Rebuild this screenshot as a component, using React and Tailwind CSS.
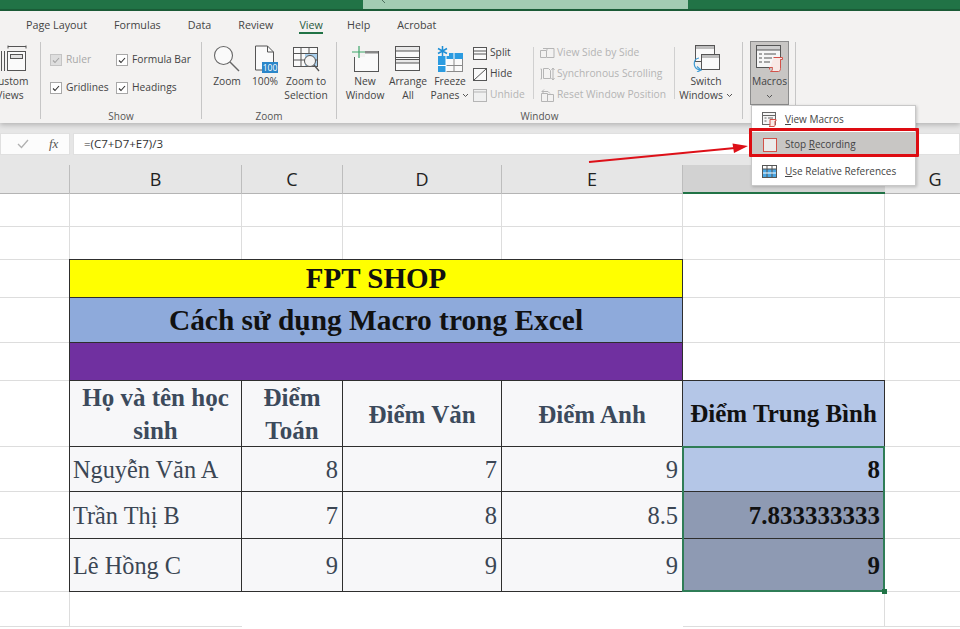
import React from "react";

const uiFont = "font-['Open_Sans',sans-serif]";
const serif = "font-['Liberation_Serif',serif]";

function Tab({ label, active, className = "" }) {
  return (
    <div className={"relative text-[10.75px] leading-[14px] " + className + " " + (active ? "text-[#2a5a40] font-medium" : "text-[#444]")}>
      {label}
      {active && <div className="absolute left-0 right-0 top-[14px] h-[2px] bg-[#217346]" />}
    </div>
  );
}

const Chevron = ({ className = "" }) => (
  <svg width="7" height="5" viewBox="0 0 7 5" className={className}>
    <path d="M1 1l2.5 2.5L6 1" fill="none" stroke="#555" strokeWidth="1" />
  </svg>
);

function LargeBtn({ w, icon, lines, chevron }) {
  return (
    <div className={"flex flex-col items-center shrink-0 " + w}>
      <div className="h-[31px] flex items-center justify-center">{icon}</div>
      {lines.map((l, i) => (
        <div key={i} className="h-[14px] leading-[14px] text-[10.25px] text-[#444] whitespace-nowrap flex items-center gap-[3px]">
          {l}
          {chevron && i === lines.length - 1 && <Chevron />}
        </div>
      ))}
    </div>
  );
}

function Check({ label, disabled }) {
  return (
    <div className="flex items-center gap-[4px] h-[12px] whitespace-nowrap">
      <div className={"w-[12px] h-[12px] border flex items-center justify-center " + (disabled ? "bg-[#dedede] border-[#c4c4c4]" : "bg-white border-[#a8a8a8]")}>
        <svg width="8" height="7" viewBox="0 0 8 7"><path d="M1 3.5l2 2L7 1" fill="none" stroke={disabled ? "#a5a5a5" : "#333"} strokeWidth="1.1" /></svg>
      </div>
      <span className={"text-[10.25px] " + (disabled ? "text-[#a8a8a8]" : "text-[#444]")}>{label}</span>
    </div>
  );
}

const Sep = () => <div className="w-px h-[77px] mt-[4px] bg-[#c6c6c6] shrink-0" />;

function Group({ w, label, children, className = "" }) {
  return (
    <div className={"relative flex flex-col h-[85px] shrink-0 " + w}>
      <div className={"flex flex-1 min-h-0 pt-[5px] " + className}>{children}</div>
      {label && <div className="text-center text-[10px] leading-[14px] h-[14px] text-[#555]">{label}</div>}
    </div>
  );
}

function SmallRow({ icon, label, disabled }) {
  return (
    <div className="flex items-center h-[14px] whitespace-nowrap gap-[2px]">
      {icon}
      <span className={"text-[10.25px] " + (disabled ? "text-[#b4b4b4]" : "text-[#444]")}>{label}</span>
    </div>
  );
}

const ink = "#555";
const IconCustom = () => (
  <svg width="26" height="27" viewBox="0 0 26 27">
    <path d="M7 1.5h18M7 .5v3M25 .5v3" stroke={ink} fill="none" />
    <rect x="6.5" y="6.5" width="18" height="19" fill="#fafafa" stroke={ink} />
    <rect x="9.5" y="9.5" width="12" height="4" fill="#e2e2e2" stroke={ink} />
    <path d="M.5 6v20M3.5 6v20" stroke={ink} fill="none" />
  </svg>
);
const IconZoom = () => (
  <svg width="28" height="28" viewBox="0 0 28 28">
    <circle cx="10.5" cy="10.5" r="9" fill="#fafafa" stroke="#666" strokeWidth="1.1" />
    <path d="M17 17l9 9" stroke="#666" strokeWidth="1.4" />
  </svg>
);
const Icon100 = () => (
  <svg width="26" height="28" viewBox="0 0 26 28">
    <path d="M3.5 1h12l6 6v18h-18z" fill="#fafafa" stroke="#555" />
    <path d="M15.5 1v6h6" fill="none" stroke="#555" />
    <rect x="10" y="17" width="16" height="11" fill="#2b86c9" />
    <text x="18" y="26" textAnchor="middle" fontSize="8.5" fill="#fff" fontFamily="Open Sans, sans-serif">100</text>
  </svg>
);
const IconZoomSel = () => (
  <svg width="28" height="28" viewBox="0 0 28 28">
    <rect x="1.5" y="2.5" width="24" height="19" fill="#fafafa" stroke="#555" />
    <rect x="13" y="8" width="12" height="13" fill="#a9d0ee" />
    <path d="M1.5 8.5h24M1.5 15h24M9 2.5v19M17 2.5v6" stroke="#555" fill="none" />
    <circle cx="18" cy="16" r="5.5" fill="#f4f4f4" stroke="#555" />
    <path d="M22 20l5 6" stroke="#555" strokeWidth="1.3" />
  </svg>
);
const IconNew = () => (
  <svg width="28" height="26" viewBox="0 0 28 26">
    <rect x="3.5" y="5.5" width="24" height="20" fill="#fafafa" stroke="#555" />
    <rect x="14" y="5" width="13" height="2.5" fill="#888" />
    <rect x="1" y="1" width="13" height="10" fill="#f3f2f1" />
    <path d="M8 0v12M1 6h13" stroke="#3fa66b" strokeWidth="1.2" />
  </svg>
);
const IconArrange = () => (
  <svg width="26" height="26" viewBox="0 0 26 26">
    <rect x=".5" y=".5" width="24" height="24" fill="#fafafa" stroke="#555" />
    <rect x="1" y="1" width="23" height="4" fill="#e8e8e8" />
    <rect x="1" y="14" width="23" height="3" fill="#e8e8e8" />
    <path d="M.5 5h24M.5 11.5h24M.5 13.5h24M.5 17h24" stroke="#555" fill="none" />
  </svg>
);
const IconFreeze = () => (
  <svg width="28" height="28" viewBox="0 0 28 28">
    <rect x="2.5" y="8.5" width="24" height="18" fill="#fafafa" stroke="#8a8a8a" />
    <rect x="2" y="8" width="25" height="6" fill="#2b9be0" />
    <rect x="2" y="8" width="8" height="19" fill="#2b9be0" />
    <path d="M10 20.5h17M18 14v13" stroke="#8a8a8a" fill="none" />
    <path d="M2 20.5h8M10 8v19M18 8v6" stroke="#fff" fill="none" />
    <rect x="0" y="0" width="13" height="11" fill="#f3f2f1" />
    <path d="M6.5 1v10M2 3.5l9 5M11 3.5l-9 5" stroke="#1f8fd6" strokeWidth="1.5" />
  </svg>
);
const IconSplit = () => (
  <svg width="15" height="13" viewBox="0 0 15 13">
    <rect x=".5" y=".5" width="13" height="12" fill="#fafafa" stroke="#555" />
    <path d="M.5 4h13M.5 7h13" stroke="#555" fill="none" />
  </svg>
);
const IconHide = () => (
  <svg width="15" height="13" viewBox="0 0 15 13">
    <rect x=".5" y=".5" width="13" height="12" fill="#fafafa" stroke="#555" />
    <path d="M1 12L13 1" stroke="#555" fill="none" />
  </svg>
);
const IconUnhide = () => (
  <svg width="15" height="13" viewBox="0 0 15 13">
    <rect x=".5" y=".5" width="13" height="12" fill="#f0f0f0" stroke="#b5b5b5" />
    <path d="M.5 3h13" stroke="#b5b5b5" fill="none" />
  </svg>
);
const g = "#b5b5b5";
const IconSide = () => (
  <svg width="15" height="12" viewBox="0 0 15 12">
    <path d="M.5 3.5h6v7h-6zM7 3.5V1.5h7v9H7" fill="none" stroke={g} />
    <path d="M3 1.5h4" stroke={g} />
  </svg>
);
const IconSync = () => (
  <svg width="15" height="14" viewBox="0 0 15 14">
    <path d="M.5 2h1v10h-1M3.5 1.5h5l2 2v8h-7z" fill="none" stroke={g} />
    <path d="M13 1v12M11.5 3L13 1l1.5 2M11.5 11l1.5 2 1.5-2" fill="none" stroke={g} />
  </svg>
);
const IconReset = () => (
  <svg width="15" height="14" viewBox="0 0 15 14">
    <path d="M1.5 5.5h6v8h-6zM7.5 6.5h6v7h-6z" fill="none" stroke={g} />
    <path d="M2 3.5h6l2 2M4 1.5L2 3.5l2 2" fill="none" stroke={g} />
  </svg>
);
const IconSwitch = () => (
  <svg width="29" height="27" viewBox="0 0 29 27">
    <rect x="3.5" y=".5" width="19" height="16" fill="#fafafa" stroke="#555" />
    <rect x="4" y="1" width="18" height="3" fill="#bdbdbd" />
    <rect x="9.5" y="9.5" width="18" height="15" fill="#fafafa" stroke="#555" />
    <rect x="10" y="10" width="17" height="3" fill="#bdbdbd" />
    <path d="M7 13C1 14 0 23 8 25M5 21.5L9 25l-4 2" fill="none" stroke="#3d9bd4" strokeWidth="1.2" />
  </svg>
);
const IconMacros = () => (
  <svg width="28" height="28" viewBox="0 0 28 28">
    <rect x=".5" y=".5" width="24" height="22" fill="#f6f6f6" stroke="#555" />
    <rect x="1" y="1" width="23" height="4" fill="#cfcfcf" />
    <path d="M.5 5h24M3 9h3M8 9h12M3 13h3M8 13h8M3 17h3M8 17h6" stroke="#555" />
    <path d="M17.5 12.5h9v2h-2v9c0 2-1 3-2 3h-8c1 0 2-1 2-3v-1h-3v2" fill="#f8e9e6" stroke="#d2524a" />
  </svg>
);
const IconMiniMacros = () => (
  <svg width="15" height="15" viewBox="0 0 15 15">
    <rect x=".5" y=".5" width="13" height="12" fill="#f6f6f6" stroke="#666" />
    <path d="M.5 3.5h13M2.5 6h2M6 6h5M2.5 9h2" stroke="#666" />
    <path d="M8 7.5h6v1.5h-1v4c0 1-.5 1.5-1 1.5H7c.5 0 1-.5 1-1.5z" fill="#f8e9e6" stroke="#d2524a" />
  </svg>
);
const IconRel = () => (
  <svg width="15" height="13" viewBox="0 0 15 13">
    <rect x=".5" y=".5" width="14" height="12" fill="#fff" stroke="#555" />
    <rect x="1" y="4" width="13" height="8" fill="#4aa8e6" />
    <path d="M.5 4h14M5 .5v12M10 .5v12" stroke="#555" fill="none" />
    <path d="M1 8h13" stroke="#fff" fill="none" />
  </svg>
);

const line = "border-[#dddddd]";
const tbl = "border border-[#2e2e2e] -ml-px -mt-px relative z-10";

function Blank({ noR, noB }) {
  return <div className={"box-border " + line + (noR ? "" : " border-r") + (noB ? "" : " border-b")} />;
}

const headCls = tbl + " bg-[#f7f7f9] flex items-center justify-center pt-[1px] text-center font-bold text-[#3c4a5c] text-[25px] leading-[33px]";
const nameCls = tbl + " bg-[#f7f7f9] flex items-center pl-[3px] pt-[2px] text-[24.3px] text-[#3b4654] whitespace-nowrap";
const numCls = tbl + " bg-[#f7f7f9] flex items-center justify-end pr-[4px] pt-[2px] text-[24.5px] text-[#3b4654]";
const resCls = "flex items-center justify-end pr-[4px] pt-[2px] text-[25px] font-bold text-[#111]";

function Row({ name, c, d, e, res, resBg }) {
  return (
    <>
      <Blank />
      <div className={nameCls}>{name}</div>
      <div className={numCls}>{c}</div>
      <div className={numCls}>{d}</div>
      <div className={numCls}>{e}</div>
      <div className={tbl + " " + resCls + " " + resBg}>{res}</div>
      <Blank noR />
    </>
  );
}

function ColHead({ w, label, active }) {
  return (
    <div className={"relative h-[29px] shrink-0 box-border flex items-center justify-center text-[18px] text-[#222] " + w + (active ? " bg-[#d2d2d2] border-b-2 border-[#217346]" : " border-r border-[#bdbdbd]")}>
      {label}
    </div>
  );
}

export default function App() {
  return (
    <div className={"relative w-[960px] h-[629px] overflow-hidden bg-white " + uiFont}>
      {/* title bar */}
      <div className="h-[11px] bg-[#217346] border-b-[2px] border-[#1b5e39] box-border">
        <div className="ml-[363px] w-[325px] h-[9px] bg-[#a3ccb3] pl-[17px]">
          <svg width="7" height="5" viewBox="0 0 7 5" className="block"><path d="M2 0l3 3" stroke="#4f6f5f" strokeWidth="1" fill="none" /></svg>
        </div>
      </div>

      {/* ribbon */}
      <div className="relative z-20 h-[112px] bg-[#f3f2f1] shadow-[0_2px_5px_rgba(0,0,0,0.22)]">
        <div className="h-[27px] pt-[7px] pl-[26px] flex gap-[27px]">
          <Tab label="Page Layout" />
          <Tab label="Formulas" />
          <Tab label="Data" />
          <Tab label="Review" />
          <Tab label="View" active className="-ml-[1px]" />
          <Tab label="Help" className="-ml-[3px]" />
          <Tab label="Acrobat" />
        </div>
        <div className="flex h-[85px]">
          <Group w="w-[40px]">
            <div className="-ml-[20px]">
              <LargeBtn w="w-[60px]" icon={<div className="ml-[7px]"><IconCustom /></div>} lines={["Custom", "Views"]} />
            </div>
          </Group>
          <Sep />
          <Group w="w-[160px]" label="Show">
            <div className="grid grid-cols-[66px_auto] gap-y-[16px] pl-[9px] pt-[11px] content-start">
              <Check label="Ruler" disabled />
              <Check label="Formula Bar" />
              <Check label="Gridlines" />
              <Check label="Headings" />
            </div>
          </Group>
          <Sep />
          <Group w="w-[134px]" label="Zoom" className="pl-[7px]">
            <LargeBtn w="w-[36px]" icon={<IconZoom />} lines={["Zoom"]} />
            <LargeBtn w="w-[40px]" icon={<Icon100 />} lines={["100%"]} />
            <LargeBtn w="w-[42px]" icon={<IconZoomSel />} lines={["Zoom to", "Selection"]} />
          </Group>
          <Sep />
          <Group w="w-[405px]" label="Window" className="pl-[6px]">
            <LargeBtn w="w-[44px]" icon={<IconNew />} lines={["New", "Window"]} />
            <LargeBtn w="w-[42px]" icon={<IconArrange />} lines={["Arrange", "All"]} />
            <LargeBtn w="w-[42px]" icon={<IconFreeze />} lines={["Freeze", "Panes"]} chevron />
            <div className="ml-[2px] w-[60px] flex flex-col gap-[7px] pt-[3px] shrink-0">
              <SmallRow icon={<IconSplit />} label="Split" />
              <SmallRow icon={<IconHide />} label="Hide" />
              <SmallRow icon={<IconUnhide />} label="Unhide" disabled />
            </div>
            <div className="w-px h-[52px] mt-[4px] bg-[#d0d0d0] shrink-0" />
            <div className="ml-[6px] w-[134px] flex flex-col gap-[7px] pt-[3px] shrink-0">
              <SmallRow icon={<IconSide />} label="View Side by Side" disabled />
              <SmallRow icon={<IconSync />} label="Synchronous Scrolling" disabled />
              <SmallRow icon={<IconReset />} label="Reset Window Position" disabled />
            </div>
            <div className="w-px h-[52px] mt-[4px] bg-[#d0d0d0] shrink-0" />
            <LargeBtn w="w-[62px]" icon={<IconSwitch />} lines={["Switch", "Windows"]} chevron />
          </Group>
          <Sep />
          <Group w="w-[52px]">
            <div className="ml-[7px] -mt-[2px] w-[39px] h-[64px] bg-[#c8c6c4] border border-[#8c8c8c] box-border flex flex-col items-center pt-[2px]">
              <div className="h-[30px] flex items-center"><IconMacros /></div>
              <div className="h-[14px] leading-[14px] text-[10.25px] text-[#444]">Macros</div>
              <div className="h-[12px] mt-[2px] flex items-center"><Chevron /></div>
            </div>
          </Group>
          <Sep />
        </div>
      </div>

      {/* formula bar */}
      <div className="h-[32px] bg-[#e6e6e6] pt-[10px] flex gap-[3px]">
        <div className="w-[70px] h-[22px] bg-[#fcfcfc] border border-[#e0e0e0] box-border flex items-center">
          <svg width="12" height="10" viewBox="0 0 12 10" className="ml-[16px] shrink-0"><path d="M1 5l3.5 3.5L11 1" fill="none" stroke="#b0b0b0" strokeWidth="1.3" /></svg>
          <span className="ml-[20px] font-['Liberation_Serif',serif] italic text-[13px] text-[#555]">fx</span>
        </div>
        <div className="flex-1 h-[22px] bg-white border border-[#e0e0e0] box-border flex items-center pl-[10px] text-[11.5px] text-[#333]">
          =(C7+D7+E7)/3
        </div>
      </div>

      {/* column headers */}
      <div className="h-[39px] bg-[#e6e6e6] pt-[10px] box-border border-b border-[#b4b4b4] flex">
        <ColHead w="w-[70px]" label="" />
        <ColHead w="w-[172px]" label="B" />
        <ColHead w="w-[101px]" label="C" />
        <ColHead w="w-[159px]" label="D" />
        <ColHead w="w-[181px]" label="E" />
        <ColHead w="w-[202px]" label="" active />
        <div className="flex-1 h-[29px] flex items-center justify-center text-[18px] text-[#222] pl-[25px]">G</div>
      </div>

      {/* sheet */}
      <div className={"relative grid grid-cols-[70px_172px_101px_159px_181px_202px_75px] grid-rows-[33px_33px_38px_45px_38px_66px_45px_47px_53px_35px_3px] " + serif}>
        {[0, 1].map((r) => (
          <React.Fragment key={r}>
            <Blank /><Blank /><Blank /><Blank /><Blank /><Blank /><Blank noR />
          </React.Fragment>
        ))}

        <Blank />
        <div className={tbl + " col-span-4 bg-[#ffff00] flex items-center justify-center pt-[1px] font-bold text-[29px] text-[#111]"}>FPT SHOP</div>
        <Blank /><Blank noR />

        <Blank />
        <div className={tbl + " col-span-4 bg-[#8eaadb] flex items-center justify-center pt-[1px] font-bold text-[29.4px] text-[#111] whitespace-nowrap"}>Cách sử dụng Macro trong Excel</div>
        <Blank /><Blank noR />

        <Blank />
        <div className={tbl + " col-span-4 bg-[#7030a0]"} />
        <Blank /><Blank noR />

        <Blank />
        <div className={headCls}>Họ và tên học<br />sinh</div>
        <div className={headCls}>Điểm<br />Toán</div>
        <div className={headCls}>Điểm Văn</div>
        <div className={headCls}>Điểm Anh</div>
        <div className={tbl + " bg-[#b4c6e7] flex items-center justify-center pt-[1px] font-bold text-[25px] text-[#111] whitespace-nowrap"}>Điểm Trung Bình</div>
        <Blank noR />

        <Row name="Nguyễn Văn A" c="8" d="7" e="9" res="8" resBg="bg-[#b4c6e7]" />
        <Row name="Trần Thị B" c="7" d="8" e="8.5" res="7.833333333" resBg="bg-[#8e9ab3]" />
        <Row name="Lê Hồng C" c="9" d="9" e="9" res="9" resBg="bg-[#8e9ab3]" />

        <Blank /><Blank noR />
        <div className="col-span-3" />
        <Blank /><Blank noR />

        {/* selection */}
        <div className="absolute z-20 left-[682px] top-[252px] w-[203px] h-[146px] border-2 border-[#2f7d57] box-border" />
        <div className="absolute z-30 left-[882px] top-[395px] w-[5px] h-[5px] bg-[#217346]" />
      </div>

      {/* dropdown */}
      <div className="absolute z-30 left-[751px] top-[105px] w-[165px] h-[81px] bg-white border border-[#c8c8c8] shadow-[1px_1px_3px_rgba(0,0,0,0.2)] box-border text-[10px] text-[#444]">
        <div className="h-[26px] flex items-center pl-[10px] gap-[8px]">
          <IconMiniMacros />
          <span><span className="underline">V</span>iew Macros</span>
        </div>
        <div className="h-[25px] flex items-center pl-[11px] gap-[8px] bg-[#c8c6c4]">
          <div className="w-[14px] h-[14px] bg-[#ececec] border border-[#d2524a] box-border" />
          <span>Stop <span className="underline">R</span>ecording</span>
        </div>
        <div className="h-[28px] flex items-center pl-[10px] gap-[8px]">
          <IconRel />
          <span><span className="underline">U</span>se Relative References</span>
        </div>
      </div>
      <div className="absolute z-40 left-[749px] top-[128px] w-[170px] h-[29px] border-[3px] border-[#dd0c12] rounded-[1px] box-border" />

      {/* arrow */}
      <svg className="absolute z-40 left-[585px] top-[138px]" width="168" height="28" viewBox="0 0 168 28">
        <path d="M4 24L150 10" stroke="#dd1018" strokeWidth="2" fill="none" />
        <path d="M147.5 5.5L163 8 149 15z" fill="#dd1018" />
      </svg>
    </div>
  );
}
